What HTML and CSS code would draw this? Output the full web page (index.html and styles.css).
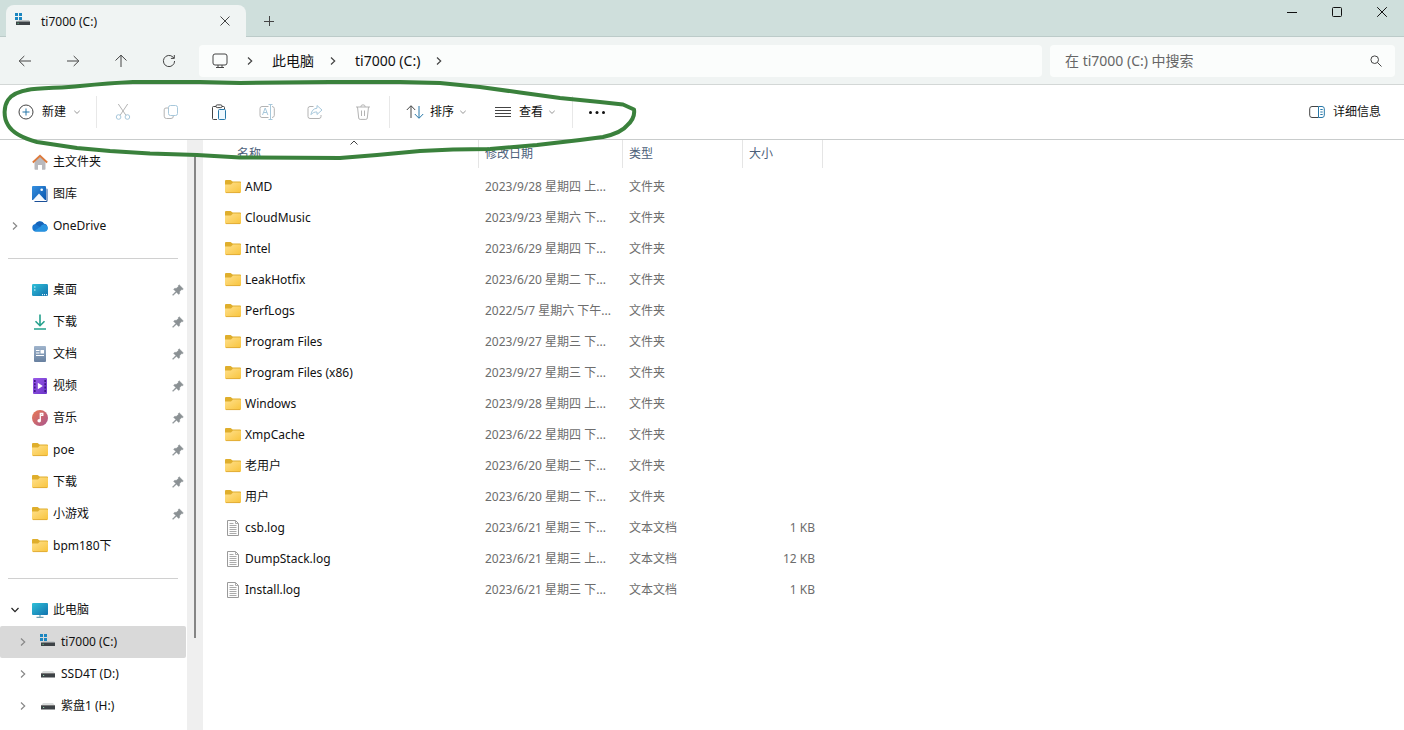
FILE: index.html
```html
<!DOCTYPE html>
<html lang="zh-CN">
<head>
<meta charset="utf-8">
<title>ti7000 (C:)</title>
<link rel="stylesheet" href="styles.css">
</head>
<body>
<svg class="defs" aria-hidden="true">
  <defs>
    <linearGradient id="g-folder" x1="0" y1="0" x2="1" y2="1"><stop offset="0" stop-color="#ffe08c"/><stop offset="1" stop-color="#f8c43c"/></linearGradient>
    <linearGradient id="g-teal" x1="0" y1="0" x2="1" y2="1"><stop offset="0" stop-color="#2fc0d8"/><stop offset="1" stop-color="#1272ae"/></linearGradient>
    <linearGradient id="g-doc" x1="0" y1="0" x2="0" y2="1"><stop offset="0" stop-color="#9fb4cc"/><stop offset="1" stop-color="#67809f"/></linearGradient>
    <linearGradient id="g-video" x1="0" y1="0" x2="1" y2="1"><stop offset="0" stop-color="#9a5be8"/><stop offset="1" stop-color="#6a34c8"/></linearGradient>
    <linearGradient id="g-music" x1="0" y1="0" x2="1" y2="1"><stop offset="0" stop-color="#ea7a52"/><stop offset="1" stop-color="#a9558f"/></linearGradient>
    <linearGradient id="g-pic" x1="0" y1="0" x2="1" y2="1"><stop offset="0" stop-color="#3590e0"/><stop offset="1" stop-color="#0b56ad"/></linearGradient>
  </defs>
  <symbol id="folder" viewBox="0 0 16 16">
    <path d="M0 2a1 1 0 0 1 1-1h4.600l2 1.600H15a1 1 0 0 1 1 1V9H0z" fill="#dfae2c"/>
    <path d="M0 5.500h6l2-1.900h7a1 1 0 0 1 1 1V13a1 1 0 0 1-1 1H1a1 1 0 0 1-1-1z" fill="url(#g-folder)"/>
    <path d="M1 13.600h14" stroke="#dba431" stroke-width=".8"/>
  </symbol>
  <symbol id="file" viewBox="0 0 16 16">
    <path d="M2.500.5h8l3 3v12h-11z" fill="#fdfdfd" stroke="#9a9a9a"/>
    <path d="M10.500.5v3h3M4.500 3.500h4M4.500 5.500h7M4.500 7.500h7M4.500 9.500h7M4.500 11.500h7M4.500 13.500h7" fill="none" stroke="#aaa"/>
  </symbol>
  <symbol id="disk-win" viewBox="0 0 16 16">
    <path d="M0 0h3v3H0zM4 0h3v3H4zM0 4h3v3H0zM4 4h3v3H4z" fill="#1b86c0"/>
    <path d="M3 8.500 4 7h10l1 1.500z" fill="#c4c8c9"/><path d="M1 8.500h14V12H1z" fill="#3d4246"/><path d="M2.500 10.300h1.200" stroke="#5fd08e"/>
  </symbol>
  <symbol id="disk" viewBox="0 0 16 16">
    <path d="M3 5h10l2 2.600H1z" fill="#dadddd"/><path d="M1 7.500h14v4H1z" fill="#3d4246"/><path d="M1 7.500h14" stroke="#777"/><path d="M3 9.500h1.200" stroke="#8fd0a8"/>
  </symbol>
  <symbol id="pin" viewBox="0 0 12 12">
    <path d="M7.200.8 11.300 4.900 10.400 5.700 9.700 5.500 7.700 7.600 7.600 9.600 6.700 10.400 4.500 8.200 1 11.400.5 11 3.800 7.500 1.600 5.300 2.500 4.400 4.500 4.300 6.500 2.300 6.300 1.600Z" fill="#8b9194" stroke="#8b9194" stroke-width=".5"/>
  </symbol>
  <symbol id="right" viewBox="0 0 8 10"><path d="m2 1.500 3.700 3.500L2 8.500" fill="none" stroke="currentColor" stroke-width="1.200"/></symbol>
  <symbol id="down" viewBox="0 0 6 6"><path d="m.3 1.800 2.700 2.600 2.700-2.600" fill="none" stroke="#8a8a8a" stroke-width=".9"/></symbol>
</svg>

<header class="titlebar">
  <div class="tab">
    <svg class="i16"><use href="#disk-win"/></svg>
    <span class="tab-name">ti7000 (C:)</span>
    <button class="plain" aria-label="关闭标签页"><svg class="i10" viewBox="0 0 10 10"><path d="m.5.5 9 9m0-9-9 9" class="line"/></svg></button>
  </div>
  <button class="plain new-tab" aria-label="新标签页"><svg class="i10" viewBox="0 0 10 10"><path d="M0 5.500h10M5.500 0v10" class="line"/></svg></button>
  <div class="window-buttons">
    <button class="plain" aria-label="最小化"><svg class="i10" viewBox="0 0 10 10"><path d="M0 5.500h10" class="line strong"/></svg></button>
    <button class="plain" aria-label="最大化"><svg class="i10" viewBox="0 0 10 10"><rect x=".5" y=".5" width="9" height="9" rx="1" class="line strong"/></svg></button>
    <button class="plain" aria-label="关闭"><svg class="i10" viewBox="0 0 10 10"><path d="m.2.2 9.600 9.600m0-9.600L.2 9.800" class="line strong"/></svg></button>
  </div>
</header>

<div class="navbar">
  <button class="plain nav-button" aria-label="后退"><svg class="i14" viewBox="0 0 14 14"><path d="M13 7H1.300M6.300 2 1.200 7l5.100 5" class="line"/></svg></button>
  <button class="plain nav-button" aria-label="前进"><svg class="i14" viewBox="0 0 14 14"><path d="M1 7h11.700M7.700 2l5.100 5-5.100 5" class="line"/></svg></button>
  <button class="plain nav-button" aria-label="向上"><svg class="i14" viewBox="0 0 14 14"><path d="M7 13V1.300M1.500 6.500 7 1.200l5.500 5.300" class="line"/></svg></button>
  <button class="plain nav-button" aria-label="刷新"><svg class="i14" viewBox="0 0 14 14"><path d="M12.600 7A5.600 5.600 0 1 1 11 3.100l1 1M12.300 1v3.400H8.900" class="line"/></svg></button>
  <nav class="address" aria-label="路径">
    <svg class="i16 pc" viewBox="0 0 16 16"><rect x="1" y="1" width="14" height="11" rx="2" class="line"/><path d="M6 12v2.500M10 12v2.500M4 14.500h8" class="line"/></svg>
    <svg class="crumb-arrow"><use href="#right"/></svg>
    <a href="#">此电脑</a>
    <svg class="crumb-arrow"><use href="#right"/></svg>
    <a href="#">ti7000 (C:)</a>
    <svg class="crumb-arrow"><use href="#right"/></svg>
  </nav>
  <div class="search">
    <input type="search" placeholder="在 ti7000 (C:) 中搜索" aria-label="在 ti7000 (C:) 中搜索">
    <svg class="i12" viewBox="0 0 12 12"><circle cx="4.700" cy="4.700" r="3.800" class="line"/><path d="m7.500 7.500 4 4" class="line"/></svg>
  </div>
</div>

<div class="toolbar">
  <button class="plain tool new"><svg class="i16" viewBox="0 0 16 16"><circle cx="8" cy="8" r="7" class="line"/><path d="M8 4.500v7M4.500 8h7" class="blue"/></svg>新建<svg class="i6"><use href="#down"/></svg></button>
  <span class="divider"></span>
  <div class="icon-tools">
    <button class="plain" disabled aria-label="剪切"><svg class="i16" viewBox="0 0 16 16"><path d="M3.300 0 11 11.400M12.700 0 5 11.400" class="line"/><circle cx="3.600" cy="13" r="2.300" class="blue"/><circle cx="12.400" cy="13" r="2.300" class="blue"/></svg></button>
    <button class="plain" disabled aria-label="复制"><svg class="i16" viewBox="0 0 16 16"><rect x="5.500" y="1.500" width="9" height="10" rx="2" class="blue"/><path d="M5.500 4H3a1.800 1.800 0 0 0-1.800 1.800v6.400A2.300 2.300 0 0 0 3.500 14.500H8A2.300 2.300 0 0 0 10.300 12" class="line"/></svg></button>
    <button class="plain" aria-label="粘贴"><svg class="i16" viewBox="0 0 16 16"><path d="M5 2.500H2.500a1 1 0 0 0-1 1v11a1 1 0 0 0 1 1H6M11 2.500h1.500a1 1 0 0 1 1 1V5" class="line"/><rect x="5" y=".9" width="6" height="2.700" rx="1.200" class="line"/><rect x="7.500" y="5.500" width="7" height="10" rx="1" class="blue paper"/></svg></button>
    <button class="plain" disabled aria-label="重命名"><svg class="i16" viewBox="0 0 16 16"><path d="M9.500 2.500H3A2 2 0 0 0 1 4.500v7a2 2 0 0 0 2 2h6.500M13 2.500a2.300 2.300 0 0 1 2.300 2v7a2.300 2.300 0 0 1-2.300 2" class="line"/><path d="m3.500 11 2.700-7 2.700 7M4.500 8.500h3.500M9.500.5h4M11.500.5v15M9.500 15.500h4" class="blue"/></svg></button>
    <button class="plain" disabled aria-label="共享"><svg class="i16" viewBox="0 0 16 16"><path d="M6.500 2.500H3a2 2 0 0 0-2 2v8a2 2 0 0 0 2 2h9a2 2 0 0 0 2-2V11" class="line"/><path d="M10 1.500 15 6l-5 4.500V8C7.500 7.800 5.600 8.700 4 10.700 4.400 7 6.400 4.500 10 4.200z" class="blue"/></svg></button>
    <button class="plain" disabled aria-label="删除"><svg class="i16" viewBox="0 0 16 16"><path d="M1 3h14M5.800 3a2.200 2.200 0 0 1 4.400 0M2.500 3l1.200 11a1.500 1.500 0 0 0 1.500 1.400h5.600a1.500 1.500 0 0 0 1.500-1.400L13.500 3M6.500 6.500v5.500M9.500 6.500v5.500" class="line"/></svg></button>
  </div>
  <span class="divider"></span>
  <button class="plain tool sort"><svg class="i18" viewBox="0 0 18 18"><path d="M5 15V3M.8 7 5 2.700 9.200 7" class="line"/><path d="M13 3v12M8.800 11l4.200 4.300 4.200-4.300" class="blue"/></svg>排序<svg class="i6"><use href="#down"/></svg></button>
  <button class="plain tool view"><svg class="i18" viewBox="0 0 18 18"><path d="M0 4.500h16M0 7.500h16M0 10.500h16M0 13.500h16" class="line"/></svg>查看<svg class="i6"><use href="#down"/></svg></button>
  <span class="divider"></span>
  <button class="plain more" aria-label="查看更多"><svg class="i18" viewBox="0 0 18 18"><g fill="#111"><circle cx="2.500" cy="9.500" r="1.500"/><circle cx="9" cy="9.500" r="1.500"/><circle cx="15.500" cy="9.500" r="1.500"/></g></svg></button>
  <button class="plain tool details"><svg class="i16" viewBox="0 0 16 16"><path d="M9.500 2.500H3A2.300 2.300 0 0 0 .7 4.800v6.400A2.300 2.300 0 0 0 3 13.500h6.500" class="line"/><path d="M9.500 2.500H13a2.300 2.300 0 0 1 2.300 2.300v6.400a2.300 2.300 0 0 1-2.300 2.300H9.500zM11.300 5.500h2.400M11.300 8h2.400M11.300 10.500h2.400" class="blue"/></svg>详细信息</button>
</div>

<div class="main">
  <nav class="sidebar" aria-label="导航窗格">
    <a href="#" class="item"><span class="twist"></span><svg class="i16" viewBox="0 0 16 16"><path d="M2.500 7 8 2.500 13.500 7v8a.8.8 0 0 1-.8.8H10V11H6v4.800H3.300a.8.8 0 0 1-.8-.8z" fill="#b9b9bd"/><path d="M.8 8.500 8 1.800l7.200 6.700" fill="none" stroke="#dd7a3c" stroke-width="1.800"/></svg>主文件夹</a>
    <a href="#" class="item"><span class="twist"></span><svg class="i16" viewBox="0 0 16 16"><path d="M14.500 2.500a1 1 0 0 1 1 1V15a1 1 0 0 1-1 .9H2.500V15h12z" fill="#1a4f98"/><path d="M0 1a1 1 0 0 1 1-1h12a1 1 0 0 1 1 1v13H0z" fill="url(#g-pic)"/><path d="M1 14 7 7.500l6 6.500z" fill="#f3f8fd"/><circle cx="9.700" cy="3.800" r="1.300" fill="#fff"/></svg>图库</a>
    <a href="#" class="item"><span class="twist"><svg class="arrow"><use href="#right"/></svg></span><svg class="i16" viewBox="0 0 16 16"><path d="M3.800 13.500a3.800 3.800 0 0 1-.5-7.500A5 5 0 0 1 12 5.800a3.900 3.900 0 0 1 .5 7.700z" fill="#1976cf"/><path d="M3.500 6A5 5 0 0 1 12 5.800L8 9z" fill="#1563b8"/><path d="M2 13 8.500 8.800a3.500 3.500 0 0 1 6.800 3.200 3 3 0 0 1-2.800 1.500H3.800z" fill="#2793e0"/></svg>OneDrive</a>
    <hr>
    <a href="#" class="item"><span class="twist"></span><svg class="i16" viewBox="0 0 16 16"><rect y="2" width="16" height="12" rx="1.300" fill="url(#g-teal)"/><path d="M2 5h1.500M2 8h1.500M10 12.700h1M12 12.700h1M14 12.700h1" stroke="#dff6ff" stroke-width="1.200"/></svg>桌面<svg class="pin"><use href="#pin"/></svg></a>
    <a href="#" class="item"><span class="twist"></span><svg class="i16" viewBox="0 0 16 16"><path d="M8 .5v11M3.500 7.300 8 11.700l4.500-4.400M2 15h12" fill="none" stroke="#25a18d" stroke-width="1.600"/></svg>下载<svg class="pin"><use href="#pin"/></svg></a>
    <a href="#" class="item"><span class="twist"></span><svg class="i16" viewBox="0 0 16 16"><rect x="2" y="0" width="12" height="16" rx="1" fill="url(#g-doc)"/><path d="M4 4.500h3.500M4 7h3.500M4 9.500h8" stroke="#fff" stroke-width="1.100"/><path d="M8.500 4h3.500v3.500H8.500z" fill="#fff"/></svg>文档<svg class="pin"><use href="#pin"/></svg></a>
    <a href="#" class="item"><span class="twist"></span><svg class="i16" viewBox="0 0 16 16"><rect x="1" y="0" width="14" height="16" rx="1" fill="url(#g-video)"/><path d="M2.800 2v12M13.200 2v12" stroke="#3d1683" stroke-width="1.600" stroke-dasharray="2 1.300"/><path d="m5.800 4.700 5 3.300-5 3.300z" fill="#fff"/></svg>视频<svg class="pin"><use href="#pin"/></svg></a>
    <a href="#" class="item"><span class="twist"></span><svg class="i16" viewBox="0 0 16 16"><circle cx="8" cy="8" r="8" fill="url(#g-music)"/><path d="M8.300 10.500V3.500h2.500v1.800H9" fill="none" stroke="#fff" stroke-width="1.300"/><circle cx="7.200" cy="10.700" r="1.800" fill="#fff"/></svg>音乐<svg class="pin"><use href="#pin"/></svg></a>
    <a href="#" class="item"><span class="twist"></span><svg class="i16"><use href="#folder"/></svg>poe<svg class="pin"><use href="#pin"/></svg></a>
    <a href="#" class="item"><span class="twist"></span><svg class="i16"><use href="#folder"/></svg>下载<svg class="pin"><use href="#pin"/></svg></a>
    <a href="#" class="item"><span class="twist"></span><svg class="i16"><use href="#folder"/></svg>小游戏<svg class="pin"><use href="#pin"/></svg></a>
    <a href="#" class="item"><span class="twist"></span><svg class="i16"><use href="#folder"/></svg>bpm180下</a>
    <hr>
    <a href="#" class="item"><span class="twist open"><svg class="arrow"><use href="#right"/></svg></span><svg class="i16" viewBox="0 0 16 16"><rect y="1" width="16" height="12" rx="1" fill="url(#g-teal)"/><path d="M8 13v2M4.500 15.300h7" stroke="#6f9fb2" stroke-width="1.200"/></svg>此电脑</a>
    <a href="#" class="item child selected"><span class="twist"><svg class="arrow"><use href="#right"/></svg></span><svg class="i16"><use href="#disk-win"/></svg>ti7000 (C:)</a>
    <a href="#" class="item child"><span class="twist"><svg class="arrow"><use href="#right"/></svg></span><svg class="i16"><use href="#disk"/></svg>SSD4T (D:)</a>
    <a href="#" class="item child"><span class="twist"><svg class="arrow"><use href="#right"/></svg></span><svg class="i16"><use href="#disk"/></svg>紫盘1 (H:)</a>
  </nav>
  <div class="scrollbar"><div class="thumb"></div></div>
  <main class="files">
    <table>
      <colgroup><col class="c-name"><col class="c-date"><col class="c-type"><col class="c-size"></colgroup>
      <thead><tr>
        <th class="sorted"><div class="head">名称</div><svg class="sort-mark" viewBox="0 0 8 5"><path d="M.5 4.500 4 1l3.500 3.500" class="line"/></svg></th>
        <th><div class="head">修改日期</div></th><th><div class="head">类型</div></th><th><div class="head">大小</div></th>
      </tr></thead>
      <tbody>
        <tr><td><span class="name"><svg class="i16"><use href="#folder"/></svg>AMD</span></td><td>2023/9/28 星期四 上...</td><td>文件夹</td><td></td></tr>
        <tr><td><span class="name"><svg class="i16"><use href="#folder"/></svg>CloudMusic</span></td><td>2023/9/23 星期六 下...</td><td>文件夹</td><td></td></tr>
        <tr><td><span class="name"><svg class="i16"><use href="#folder"/></svg>Intel</span></td><td>2023/6/29 星期四 下...</td><td>文件夹</td><td></td></tr>
        <tr><td><span class="name"><svg class="i16"><use href="#folder"/></svg>LeakHotfix</span></td><td>2023/6/20 星期二 下...</td><td>文件夹</td><td></td></tr>
        <tr><td><span class="name"><svg class="i16"><use href="#folder"/></svg>PerfLogs</span></td><td>2022/5/7 星期六 下午...</td><td>文件夹</td><td></td></tr>
        <tr><td><span class="name"><svg class="i16"><use href="#folder"/></svg>Program Files</span></td><td>2023/9/27 星期三 下...</td><td>文件夹</td><td></td></tr>
        <tr><td><span class="name"><svg class="i16"><use href="#folder"/></svg>Program Files (x86)</span></td><td>2023/9/27 星期三 下...</td><td>文件夹</td><td></td></tr>
        <tr><td><span class="name"><svg class="i16"><use href="#folder"/></svg>Windows</span></td><td>2023/9/28 星期四 上...</td><td>文件夹</td><td></td></tr>
        <tr><td><span class="name"><svg class="i16"><use href="#folder"/></svg>XmpCache</span></td><td>2023/6/22 星期四 下...</td><td>文件夹</td><td></td></tr>
        <tr><td><span class="name"><svg class="i16"><use href="#folder"/></svg>老用户</span></td><td>2023/6/20 星期二 下...</td><td>文件夹</td><td></td></tr>
        <tr><td><span class="name"><svg class="i16"><use href="#folder"/></svg>用户</span></td><td>2023/6/20 星期二 下...</td><td>文件夹</td><td></td></tr>
        <tr><td><span class="name"><svg class="i16"><use href="#file"/></svg>csb.log</span></td><td>2023/6/21 星期三 下...</td><td>文本文档</td><td>1 KB</td></tr>
        <tr><td><span class="name"><svg class="i16"><use href="#file"/></svg>DumpStack.log</span></td><td>2023/6/21 星期三 上...</td><td>文本文档</td><td>12 KB</td></tr>
        <tr><td><span class="name"><svg class="i16"><use href="#file"/></svg>Install.log</span></td><td>2023/6/21 星期三 下...</td><td>文本文档</td><td>1 KB</td></tr>
      </tbody>
    </table>
  </main>
</div>

<svg class="marker" viewBox="0 0 640 170" aria-hidden="true"><path d="M27 90C40 88 60 88 80 86S110 83 133 82L200 82 240 83 330 82 400 82 440 83 480 87 520 92.500 560 98 600 102 623 104.500 634 109.500C635 116 631 122 627 125.500 623 131 616 134 603 137L580 140 537 145 490 149 453 149.500 420 151 377 155 340 158 240 157.500 197 155 150 153.500 110 151 77 148 37 142C22 138 12 132 8 125 3 117 4 106 8 100 12 94 20 91 30 89.500"/></svg>
</body>
</html>
```
FILE: styles.css
```css
* { box-sizing: border-box; }

body {
  margin: 0;
  min-height: 100vh;
  display: flex;
  flex-direction: column;
  position: relative;
  overflow: hidden;
  background: #fff;
  color: #111;
  font: 12px/16px "Noto Sans", "Noto Sans CJK SC", sans-serif;
}

svg { display: block; flex: none; }
a { color: inherit; text-decoration: none; }
.defs { position: absolute; width: 0; height: 0; }
.i6 { width: 6px; height: 6px; }
.i10 { width: 10px; height: 10px; }
.i12 { width: 12px; height: 12px; }
.i14 { width: 14px; height: 14px; }
.i16 { width: 16px; height: 16px; }
.i18 { width: 18px; height: 18px; }
.line { fill: none; stroke: #444; }
.strong { stroke: #111; }
.blue { fill: none; stroke: #2677a8; }
.paper { fill: #eef8fe; }

.plain {
  display: flex;
  align-items: center;
  justify-content: center;
  padding: 0;
  border: 0;
  background: none;
  color: inherit;
  font: inherit;
}

/* Title bar */
.titlebar {
  display: flex;
  height: 37px;
  padding-left: 6px;
  background: #cfdfdc;
  border-bottom: 1px solid #bccbc9;
}
.tab {
  display: flex;
  align-items: center;
  width: 240px;
  height: 32px;
  margin-top: 5px;
  padding: 0 16px 0 9px;
  border-radius: 8px 8px 0 0;
  background: #f0f4f3;
}
.tab-name { flex: 1; padding: 2px 0 0 10px; }
.new-tab { width: 46px; padding-top: 6px; }
.window-buttons { display: flex; height: 24px; margin-left: auto; }
.window-buttons .plain { width: 45px; }

/* Navigation bar */
.navbar {
  display: flex;
  align-items: center;
  height: 48px;
  padding: 0 9px 0 1px;
  background: #f0f4f3;
  border-bottom: 1px solid #d3d7d6;
}
.nav-button { width: 48px; height: 32px; }
.address, .search {
  display: flex;
  align-items: center;
  height: 32px;
  border-radius: 4px;
  background: #fbfdfc;
  font-size: 14px;
  line-height: 20px;
}
.address { flex: 1; margin: 0 8px 0 6px; padding-left: 13px; }
.pc { margin-right: 18px; }
.crumb-arrow { width: 8px; height: 10px; color: #444; }
.address a { margin: 0 15px 0 18px; }
.search { flex: 0 0 345px; padding: 0 13px 0 15px; }
.search input {
  flex: 1;
  min-width: 0;
  padding: 0;
  border: 0;
  outline: 0;
  background: none;
  font: inherit;
}
.search input::placeholder { color: #666; }

/* Command bar */
.toolbar {
  display: flex;
  align-items: center;
  height: 55px;
  padding: 0 23px 0 18px;
  border-bottom: 1px solid #c9cccc;
}
.toolbar .plain { height: 32px; }
.tool { gap: 6px; }
.toolbar .new { gap: 8px; padding-right: 16px; }
.divider { width: 1px; height: 32px; background: #e8e8e8; }
.icon-tools { display: flex; padding: 0 2px; }
.icon-tools .plain { width: 48px; }
.icon-tools .plain:disabled { opacity: .4; }
.toolbar .sort { padding-left: 16px; }
.toolbar .view { padding: 0 17px 0 29px; }
.more { width: 48px; }
.toolbar .details { gap: 8px; margin-left: auto; }

/* Body */
.main { flex: 1; display: flex; }
.sidebar { width: 187px; padding: 6px 1px 0 0; }
.item {
  display: flex;
  align-items: center;
  gap: 5px;
  height: 32px;
  padding: 0 2px 0 8px;
  border-radius: 2px;
}
.child { padding-left: 16px; }
.selected { background: #d9d9d9; }
.twist { width: 19px; padding-left: 3px; }
.arrow { width: 8px; height: 10px; color: #888; }
.open .arrow { transform: rotate(90deg); color: #222; }
.pin { width: 12px; height: 12px; margin-left: auto; }
.sidebar hr {
  height: 1px;
  margin: 16px 8px 15px;
  border: 0;
  background: #d0d0d0;
}
.scrollbar { width: 16px; padding-top: 15px; background: #efefef; }
.thumb { width: 2px; height: 84%; margin: 0 auto; background: #858585; }

/* File list */
.files { flex: 1; }
table { width: 620px; border-collapse: collapse; table-layout: fixed; }
.c-name { width: 276px; }
.c-date { width: 144px; }
.c-type { width: 120px; }
.c-size { width: 80px; }
th { position: relative; padding: 0 0 3px; font-weight: 400; text-align: left; color: #4c607a; }
.head { height: 28px; padding: 6px 0 0 6px; border-right: 1px solid #e5e5e5; }
.sorted .head { padding-left: 34px; }
.sort-mark { position: absolute; top: 0; left: 147px; width: 8px; height: 5px; }
td { height: 31px; padding: 0 0 0 6px; color: #6d6d6d; white-space: nowrap; }
td:first-child { padding-left: 22px; color: #111; }
td:last-child { padding: 0 8px 0 0; text-align: right; }
.name { display: flex; align-items: center; gap: 4px; }

/* Hand-drawn highlight over the command bar */
.marker { position: absolute; top: 0; left: 0; width: 640px; height: 170px; pointer-events: none; }
.marker path { fill: none; stroke: #3a813c; stroke-width: 4; stroke-linejoin: round; stroke-linecap: round; }
```
